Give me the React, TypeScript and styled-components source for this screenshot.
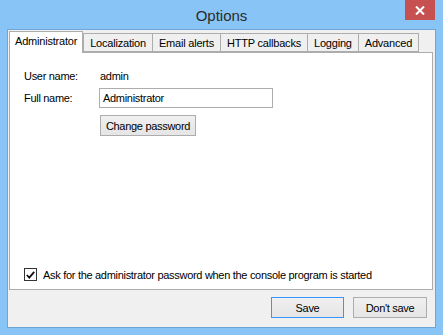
import React from "react";
import styled, { createGlobalStyle } from "styled-components";

const COLOURS = {
  FRAME: "#88c4f5",
  FRAME_EDGE: "#6fa6d8",
  CLIENT: "#f0f0f0",
  BORDER: "#adadad",
  TEXT: "#000000",
  CLOSE: "#c75050",
  FOCUS: "#3399ff",
};

const GlobalStyle = createGlobalStyle`
  html, body {
    margin: 0;
    padding: 0;
    overflow: hidden;
  }
  body {
    font-family: "Liberation Sans", Arial, sans-serif;
    font-size: 11px;
    color: ${COLOURS.TEXT};
  }
`;

const Window = styled.div`
  width: 443px;
  height: 335px;
  background: ${COLOURS.FRAME};
  display: flex;
  flex-direction: column;
  box-sizing: border-box;
`;

const TitleBar = styled.div`
  height: 29px;
  flex: none;
  display: grid;
  grid-template-columns: 1fr auto 1fr;
  padding: 0 8px;
`;

const Title = styled.div`
  grid-column: 2;
  font-size: 15px;
  color: #2b2b2b;
  line-height: 29px;
  padding-top: 1px;
`;

const CloseButton = styled.div`
  grid-column: 3;
  justify-self: end;
  width: 30px;
  height: 20px;
  background: ${COLOURS.CLOSE};
  display: flex;
  align-items: center;
  justify-content: center;
`;

const Client = styled.div`
  flex: 1;
  margin: 0 7px 7px 7px;
  border: 1px solid ${COLOURS.FRAME_EDGE};
  background: ${COLOURS.CLIENT};
  display: flex;
  flex-direction: column;
  padding: 1px 2px 0 1px;
`;

const TabStrip = styled.div`
  display: flex;
  align-items: flex-end;
  height: 21px;
  position: relative;
  z-index: 1;
`;

const Tab = styled.div<{ $active?: boolean }>`
  box-sizing: border-box;
  height: ${(p) => (p.$active ? "22px" : "19px")};
  margin-bottom: ${(p) => (p.$active ? "-1px" : "0")};
  border: 1px solid ${COLOURS.BORDER};
  border-bottom: ${(p) => (p.$active ? "none" : `1px solid ${COLOURS.BORDER}`)};
  margin-right: ${(p) => (p.$active ? "0" : "-1px")};
  background: ${(p) => (p.$active ? "#ffffff" : COLOURS.CLIENT)};
  padding: ${(p) => (p.$active ? "0 5px 3px 5px" : "0 6px")};
  display: flex;
  align-items: center;
  letter-spacing: -0.2px;
  white-space: nowrap;
`;

const Panel = styled.div`
  height: 238px;
  flex: none;
  background: #ffffff;
  border: 1px solid ${COLOURS.BORDER};
  box-sizing: border-box;
  display: flex;
  flex-direction: column;
  padding: 12px 14px 8px 14px;
  letter-spacing: -0.3px;
`;

const Form = styled.div`
  display: grid;
  grid-template-columns: 75px auto;
  align-items: center;
  justify-content: start;
`;

const Label = styled.div`
  height: 22px;
  line-height: 22px;
`;

const Value = styled.div`
  height: 22px;
  line-height: 22px;
  padding-left: 1px;
`;

const TextInput = styled.div`
  width: 174px;
  height: 20px;
  box-sizing: border-box;
  border: 1px solid ${COLOURS.BORDER};
  background: #ffffff;
  padding: 0 3px;
  line-height: 18px;
  margin: 1px 0;
`;

const Button = styled.div<{ $focused?: boolean; $width: number }>`
  width: ${(p) => p.$width}px;
  height: 21px;
  box-sizing: border-box;
  border: 1px solid ${(p) => (p.$focused ? COLOURS.FOCUS : COLOURS.BORDER)};
  background: linear-gradient(#f0f0f0, #e5e5e5);
  display: flex;
  align-items: center;
  justify-content: center;
  letter-spacing: -0.3px;
`;

const FormButton = styled(Button)`
  grid-column: 2;
  margin-top: 6px;
  margin-left: 1px;
`;

const Spacer = styled.div`
  flex: 1;
`;

const CheckRow = styled.div`
  display: flex;
  align-items: center;
  gap: 6px;
`;

const CheckBox = styled.div`
  width: 13px;
  height: 13px;
  box-sizing: border-box;
  border: 1px solid #333333;
  background: #ffffff;
  display: flex;
  align-items: center;
  justify-content: center;
`;

const Footer = styled.div`
  flex: 1;
  display: flex;
  justify-content: flex-end;
  align-items: flex-start;
  gap: 9px;
  padding: 7px 6px 0 0;
`;

export default function App() {
  const tabs = [
    "Administrator",
    "Localization",
    "Email alerts",
    "HTTP callbacks",
    "Logging",
    "Advanced",
  ];
  return (
    <>
      <GlobalStyle />
      <Window>
        <TitleBar>
          <Title>Options</Title>
          <CloseButton>
            <svg width="10" height="9" viewBox="0 0 10 9">
              <path d="M1 0.5 L9 8.5 M9 0.5 L1 8.5" stroke="#fff" strokeWidth="2" />
            </svg>
          </CloseButton>
        </TitleBar>
        <Client>
          <TabStrip>
            {tabs.map((t, i) => (
              <Tab key={t} $active={i === 0}>
                {t}
              </Tab>
            ))}
          </TabStrip>
          <Panel>
            <Form>
              <Label>User name:</Label>
              <Value>admin</Value>
              <Label>Full name:</Label>
              <TextInput>Administrator</TextInput>
              <FormButton $width={96}>Change password</FormButton>
            </Form>
            <Spacer />
            <CheckRow>
              <CheckBox>
                <svg width="9" height="8" viewBox="0 0 9 8">
                  <path d="M0.8 4 L3.3 6.6 L8.2 0.8" stroke="#111" strokeWidth="1.8" fill="none" />
                </svg>
              </CheckBox>
              Ask for the administrator password when the console program is started
            </CheckRow>
          </Panel>
          <Footer>
            <Button $focused $width={73}>Save</Button>
            <Button $width={74}>Don't save</Button>
          </Footer>
        </Client>
      </Window>
    </>
  );
}
